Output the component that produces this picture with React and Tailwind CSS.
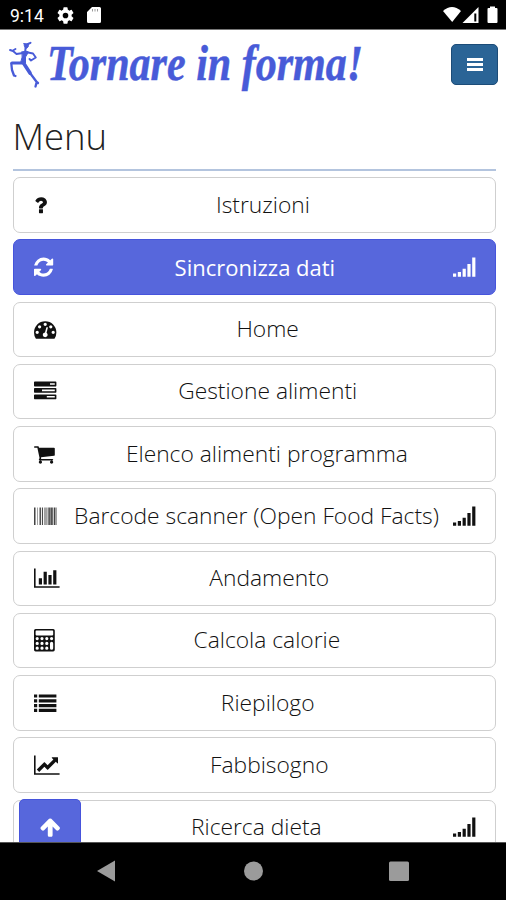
const paths = {
  question:
    "M1088 1256v240q0 16-12 28t-28 12h-240q-16 0-28-12t-12-28v-240q0-16 12-28t28-12h240q16 0 28 12t12 28zm316-600q0 54-15.5 101t-35 76.5-55 59.5-57.5 43.5-61 35.5q-41 23-68.5 65t-27.5 67q0 17-12 32.5t-28 15.5h-240q-15 0-25.5-18.5t-10.5-37.5v-45q0-83 65-156.5t143-108.5q59-27 84-56t25-76q0-42-46.5-74t-107.5-32q-65 0-108 29-35 25-107 115-13 16-31 16-12 0-25-8l-164-125q-13-10-15.5-25t5.5-28q160-266 464-266 80 0 161 31t146 83 106 127.5 41 158.5z",
  refresh:
    "M1639 1056q0 5-1 7-64 268-268 434.5t-478 166.5q-146 0-282.5-55t-243.5-157l-129 129q-19 19-45 19t-45-19-19-45v-448q0-26 19-45t45-19h448q26 0 45 19t19 45-19 45l-137 137q71 66 161 102t187 36q134 0 250-65t186-179q11-17 53-117 8-23 30-23h192q13 0 22.5 9.5t9.5 22.5zm25-800v448q0 26-19 45t-45 19h-448q-26 0-45-19t-19-45 19-45l138-138q-148-137-349-137-134 0-250 65t-186 179q-11 17-53 117-8 23-30 23h-199q-13 0-22.5-9.5t-9.5-22.5v-7q65-268 270-434.5t480-166.5q146 0 284 55.5t245 156.5l130-129q19-19 45-19t45 19 19 45z",
  dashboard:
    "M384 1152q0-53-37.5-90.5t-90.5-37.5-90.5 37.5-37.5 90.5 37.5 90.5 90.5 37.5 90.5-37.5 37.5-90.5zm192-448q0-53-37.5-90.5t-90.5-37.5-90.5 37.5-37.5 90.5 37.5 90.5 90.5 37.5 90.5-37.5 37.5-90.5zm428 481l101-382q6-26-7.5-48.5t-38.5-29.5-48 6.5-30 39.5l-101 382q-60 5-107 43.5t-63 98.5q-20 77 20 146t117 89 146-20 89-117q16-60-6-117t-72-91zm660-33q0-53-37.5-90.5t-90.5-37.5-90.5 37.5-37.5 90.5 37.5 90.5 90.5 37.5 90.5-37.5 37.5-90.5zm-640-640q0-53-37.5-90.5t-90.5-37.5-90.5 37.5-37.5 90.5 37.5 90.5 90.5 37.5 90.5-37.5 37.5-90.5zm448 192q0-53-37.5-90.5t-90.5-37.5-90.5 37.5-37.5 90.5 37.5 90.5 90.5 37.5 90.5-37.5 37.5-90.5zm320 448q0 261-141 483-19 29-54 29h-1402q-35 0-54-29-141-221-141-483 0-182 71-348t191-286 286-191 348-71 348 71 286 191 191 286 71 348z",
  tasks:
    "M1024 1408h640v-128h-640v128zm-384-512h1024v-128h-1024v128zm640-512h384v-128h-384v128zm512 832v256q0 26-19 45t-45 19h-1664q-26 0-45-19t-19-45v-256q0-26 19-45t45-19h1664q26 0 45 19t19 45zm0-512v256q0 26-19 45t-45 19h-1664q-26 0-45-19t-19-45v-256q0-26 19-45t45-19h1664q26 0 45 19t19 45zm0-512v256q0 26-19 45t-45 19h-1664q-26 0-45-19t-19-45v-256q0-26 19-45t45-19h1664q26 0 45 19t19 45z",
  cart:
    "M704 1536q0 52-38 90t-90 38-90-38-38-90 38-90 90-38 90 38 38 90zm896 0q0 52-38 90t-90 38-90-38-38-90 38-90 90-38 90 38 38 90zm128-1088v512q0 24-16.5 42.5t-40.5 21.5l-1044 122q13 60 13 70 0 16-24 64h920q26 0 45 19t19 45-19 45-45 19h-1024q-26 0-45-19t-19-45q0-11 8-31.5t16-36 21.5-40 15.5-29.5l-177-823h-204q-26 0-45-19t-19-45 19-45 45-19h256q16 0 28.5 6.5t19.5 15.5 13 24.5 8 26 5.5 29.5 4.5 26h1201q26 0 45 19t19 45z",
  barcode:
    "M0 192h63v1408h-63zM94 192h32v1408h-32zM252 192h31v1408h-31zM409 192h31v1408h-31zM503 192h63v1408h-63zM660 192h63v1408h-63zM817 192h32v1408h-32zM912 192h31v1408h-31zM975 192h31v1408h-31zM1100 192h63v1408h-63zM1226 192h94v1408h-94zM1383 192h63v1408h-63zM1478 192h62v1408h-62zM1603 192h63v1408h-63zM1698 192h31v1408h-31zM1760 192h32v1408h-32z",
  barChart:
    "M640 896v512h-256v-512h256zm384-512v1024h-256v-1024h256zm1024 1152v128h-2048v-1536h128v1408h1920zm-640-896v768h-256v-768h256zm384-384v1152h-256v-1152h256z",
  calculator:
    "M128 0H1536a128 128 0 0 1 128 128V1664a128 128 0 0 1-128 128H128a128 128 0 0 1-128-128V128a128 128 0 0 1 128-128zM192 128a64 64 0 0 0-64 64v256a64 64 0 0 0 64 64h1280a64 64 0 0 0 64-64v-256a64 64 0 0 0-64-64zM128 768a128 128 0 0 0 256 0a128 128 0 0 0-256 0zM512 768a128 128 0 0 0 256 0a128 128 0 0 0-256 0zM896 768a128 128 0 0 0 256 0a128 128 0 0 0-256 0zM1280 768a128 128 0 0 0 256 0a128 128 0 0 0-256 0zM128 1152a128 128 0 0 0 256 0a128 128 0 0 0-256 0zM512 1152a128 128 0 0 0 256 0a128 128 0 0 0-256 0zM896 1152a128 128 0 0 0 256 0a128 128 0 0 0-256 0zM128 1536a128 128 0 0 0 256 0a128 128 0 0 0-256 0zM512 1536a128 128 0 0 0 256 0a128 128 0 0 0-256 0zM896 1536a128 128 0 0 0 256 0a128 128 0 0 0-256 0zM1280 1152v384a128 128 0 0 0 256 0v-384a128 128 0 0 0-256 0z",
  list:
    "M0 192h256v256h-256zM384 192h1408v256h-1408zM0 576h256v256h-256zM384 576h1408v256h-1408zM0 960h256v256h-256zM384 960h1408v256h-1408zM0 1344h256v256h-256zM384 1344h1408v256h-1408z",
  lineChart:
    "M2048 1536v128h-2048v-1536h128v1408h1920zm-128-1248v435q0 21-19.5 29.5t-35.5-7.5l-121-121-633 633q-10 10-23 10t-23-10l-233-233-416 416-192-192 585-585q10-10 23-10t23 10l233 233 464-464-121-121q-16-16-7.5-35.5t29.5-19.5h435q14 0 23 9t9 23z",
  signal:
    "M0 1408h256v256h-256zM384 1280h256v384h-256zM768 1024h256v640h-256zM1152 640h256v1024h-256zM1536 128h256v1536h-256z",
  arrowUp:
    "M1675 971q0 51-37 90l-75 75q-38 38-91 38-54 0-90-38l-294-293v704q0 52-37.5 84.5t-90.5 32.5h-128q-53 0-90.5-32.5t-37.5-84.5v-704l-294 293q-36 38-90 38t-90-38l-75-75q-38-38-38-90 0-53 38-91l651-651q35-37 90-37 54 0 91 37l651 651q37 39 37 91z",
};

// x = left edge of the glyph, w = its advance width
const boxes = {
  question: { x: 370, w: 1024 },
  refresh: { x: 128, w: 1536 },
  cart: { x: 64, w: 1664 },
  barChart: { x: 0, w: 2048 },
  lineChart: { x: 0, w: 2048 },
  calculator: { x: 0, w: 1664 },
};

function Icon({ name, className = "" }) {
  const { x, w } = boxes[name] || { x: 0, w: 1792 };
  return (
    <svg
      viewBox={`${x} 0 ${w} 1792`}
      width={w / 80}
      height={22.4}
      className={`shrink-0 overflow-visible fill-current ${className}`}
    >
      <path d={paths[name]} fillRule={name === "calculator" ? "evenodd" : "nonzero"} />
    </svg>
  );
}

const items = [
  { icon: "question", label: "Istruzioni" },
  { icon: "refresh", label: "Sincronizza dati", online: true, active: true },
  { icon: "dashboard", label: "Home" },
  { icon: "tasks", label: "Gestione alimenti" },
  { icon: "cart", label: "Elenco alimenti programma" },
  { icon: "barcode", label: "Barcode scanner (Open Food Facts)", online: true },
  { icon: "barChart", label: "Andamento" },
  { icon: "calculator", label: "Calcola calorie" },
  { icon: "list", label: "Riepilogo" },
  { icon: "lineChart", label: "Fabbisogno" },
  { icon: null, label: "Ricerca dieta", online: true },
];

function MenuItem({ icon, label, online, active }) {
  return (
    <button
      className={`flex h-[55.5px] w-full shrink-0 items-center rounded-[7px] border-[1.5px] pr-[19px] pl-[20px] ${
        active ? "border-[#4654dc] bg-[#5767dc] text-white" : "border-[#cfcfcf] bg-white text-[#111]"
      }`}
    >
      {icon ? <Icon name={icon} /> : <span className="w-[22px] shrink-0" />}
      <span
        className={`flex-1 pl-1 text-center whitespace-nowrap ${
          active ? "text-[22px] font-normal" : "text-[22.8px] font-light"
        }`}
      >
        {label}
      </span>
      {online && <Icon name="signal" />}
    </button>
  );
}

function StatusBar() {
  return (
    <div className="flex h-[30px] shrink-0 items-center border-b border-[#777] bg-black pr-[8px] pl-[10px] text-white">
      <span className="w-[47px] pt-[3px] font-[Roboto] text-[17.5px]">9:14</span>
      <svg viewBox="2 2 20 20" className="mt-px size-[17px] fill-white">
        <path
          fillRule="evenodd"
          d="M19.14 12.94c.04-.3.06-.61.06-.94 0-.32-.02-.64-.07-.94l2.03-1.58a.5.5 0 0 0 .12-.61l-1.92-3.32a.49.49 0 0 0-.59-.22l-2.39.96c-.5-.38-1.03-.7-1.62-.94l-.36-2.54A.48.48 0 0 0 13.92 2.4h-3.84a.48.48 0 0 0-.48.41l-.36 2.54c-.59.24-1.13.57-1.62.94l-2.39-.96a.49.49 0 0 0-.59.22L2.74 8.87a.48.48 0 0 0 .12.61l2.03 1.58c-.05.3-.09.63-.09.94s.02.64.07.94l-2.03 1.58a.5.5 0 0 0-.12.61l1.92 3.32c.12.22.37.29.59.22l2.39-.96c.5.38 1.03.7 1.62.94l.36 2.54c.05.24.24.41.48.41h3.84c.24 0 .44-.17.47-.41l.36-2.54c.59-.24 1.13-.56 1.62-.94l2.39.96c.22.08.47 0 .59-.22l1.92-3.32a.48.48 0 0 0-.12-.61zM12 15.3a3.3 3.3 0 1 1 0-6.6 3.3 3.3 0 0 1 0 6.6z"
        />
      </svg>
      <svg viewBox="0 0 14 16" className="mt-px ml-[13px] h-[16px] w-[14px]">
        <path d="M5 0h7.500a1.500 1.500 0 0 1 1.500 1.500v13a1.500 1.500 0 0 1-1.500 1.500h-11a1.500 1.500 0 0 1-1.500-1.500V5z" fill="#fff" />
        <path d="M5.500 2v2.500M8 2v2.500M10.500 2v2.500" stroke="#999" strokeWidth="1" />
      </svg>
      <div className="flex-1" />
      <svg viewBox="0 0 55 18" className="h-[18px] w-[55px] fill-white">
        <path d="M0 5Q9-3 18 5L9.200 16z" />
        <path d="M19.500 17L35.500 1v16z" />
        <path d="M31.300 7.500h2v8h-2z" fill="#000" />
        <path d="M47 2V.5h5V2h1.500a1 1 0 0 1 1 1v13a1 1 0 0 1-1 1h-8a1 1 0 0 1-1-1V3a1 1 0 0 1 1-1z" />
      </svg>
    </div>
  );
}

function Runner() {
  return (
    <svg viewBox="0 0 32 48" className="h-[48px] w-[32px] shrink-0" fill="none" stroke="#485bd8" strokeLinecap="round" strokeLinejoin="round">
      <path d="M16 2.500L20.500 2.800Q21 6.500 18.500 7.500Q16 7 16 2.500z" fill="#485bd8" strokeWidth="0.800" />
      <path d="M20 3L22.500 1.800M17.500 7L17.300 10" strokeWidth="2" />
      <path d="M14 11Q18 9 20.500 11L17.500 16L17.500 22L12.500 22Q15 16 14 11z" fill="#485bd8" strokeWidth="1" />
      <path d="M15 12L8.500 13L5 10L2 9M5 9.500L7.500 8" strokeWidth="1.900" />
      <path d="M20 11.500L25 12.500L27.800 16.500L23 19.500L21.500 18" strokeWidth="1.900" />
      <path d="M14 22L4 22" strokeWidth="3.200" />
      <path d="M3.300 22.500L4 29L6 34.500L7.500 35" strokeWidth="2.300" />
      <path d="M15.500 22L22 32" strokeWidth="3.600" />
      <path d="M22 32L28.700 41L27.500 45.500M28.700 41L30 42" strokeWidth="2.300" />
    </svg>
  );
}

function Header() {
  return (
    <header className="flex h-[80px] shrink-0 items-start pt-[11px] pr-[8px] pl-[8px]">
      <Runner />
      <div className="ml-[7px] h-[56px] w-[316px]">
        <svg viewBox="0 0 316 56" className="h-[56px] w-[316px] overflow-visible">
          <text
            x="0"
            y="38.500"
            textLength="388"
            lengthAdjust="spacingAndGlyphs"
            transform="scale(0.815 1)"
            className="fill-[#485bd8] stroke-[#485bd8] font-['Liberation_Serif'] text-[51px] font-bold italic"
            strokeWidth="0.500"
          >
            Tornare in forma!
          </text>
        </svg>
      </div>
      <button className="mt-[3px] ml-auto flex h-[41px] w-[47px] items-center justify-center rounded-[5px] border-[1.5px] border-[#1c4c78] bg-[#2a6496]">
        <span className="flex w-[16px] flex-col gap-[2px]">
          <span className="h-[3px] bg-white" />
          <span className="h-[3px] bg-white" />
          <span className="h-[3px] bg-white" />
        </span>
      </button>
    </header>
  );
}

function NavBar() {
  return (
    <nav className="flex h-[58px] shrink-0 items-center justify-center border-t border-[#555] bg-black">
      <svg viewBox="0 0 506 57" className="h-[57px] w-[506px] fill-[#9b9b9b]">
        <path d="M97 28L115 17.500v21z" />
        <circle cx="253.500" cy="28" r="9.500" />
        <rect x="389" y="18.500" width="20" height="19.500" rx="1.500" />
      </svg>
    </nav>
  );
}

export default function App() {
  return (
    <div className="flex h-[900px] w-[506px] flex-col overflow-hidden bg-white font-['Open_Sans',sans-serif]">
      <StatusBar />
      <Header />
      <main className="relative flex min-h-0 flex-1 flex-col overflow-hidden pr-[10.5px] pl-[12.5px]">
        <h1 className="h-[58.5px] shrink-0 text-[36.5px] leading-[53px] font-light text-[#222]">Menu</h1>
        <div className="mb-[6px] h-[2.5px] shrink-0 bg-[#b3c4de]" />
        <div className="flex flex-col gap-[6.75px]">
          {items.map((item) => (
            <MenuItem key={item.label} {...item} />
          ))}
        </div>
        <button className="absolute bottom-[-14px] left-[19px] flex h-[57px] w-[62px] items-center justify-center rounded-[5px] border-[1.5px] border-[#4654dc] bg-[#5767dc] text-white">
          <Icon name="arrowUp" />
        </button>
      </main>
      <NavBar />
    </div>
  );
}
